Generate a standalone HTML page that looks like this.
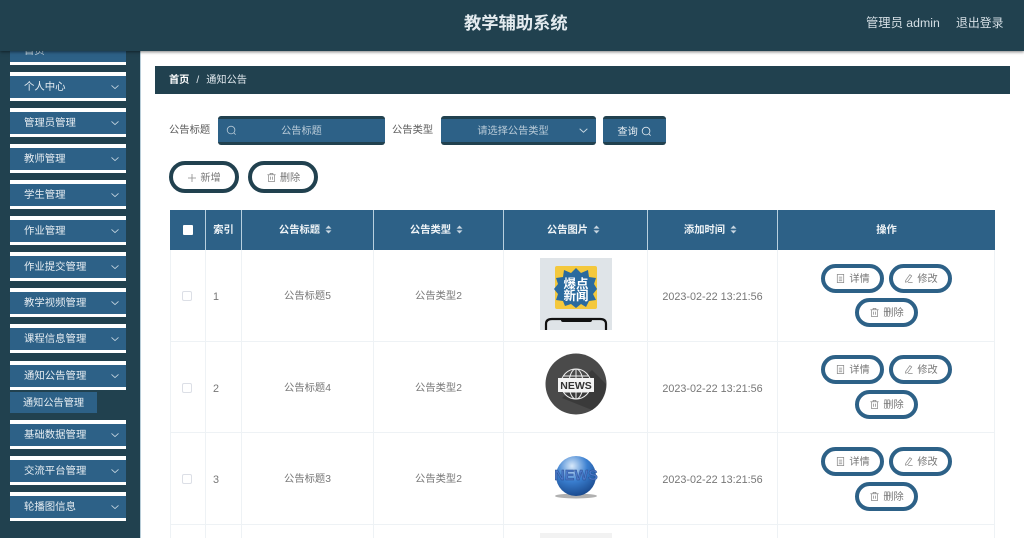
<!DOCTYPE html>
<html lang="zh-CN">
<head>
<meta charset="utf-8">
<title>教学辅助系统</title>
<style>
*{box-sizing:border-box}
html,body{margin:0;padding:0;background:#fff}
body{width:1024px;height:538px;overflow:hidden;background:#fff;position:relative;font-family:"Liberation Sans","Noto Sans CJK SC",sans-serif;font-size:10px;color:#666;filter:blur(.3px)}
.a{position:absolute}
.head{left:0;top:0;width:1024px;height:51px;background:#21414f;box-shadow:0 1px 3px rgba(0,0,0,.5);z-index:5}
.side{left:0;top:0;width:141px;height:538px;background:#21414f;border-right:1px solid #b8cdd8}
.mi{left:10px;width:116px;height:29px;background:#2d6187;border-top:4px solid #fff;border-bottom:3px solid #fff;color:#e6edf2;line-height:24px;padding-left:14px;font-size:10.4px}
.mi svg{position:absolute;left:100px;top:6px}
.sub{left:10px;top:392px;width:87px;height:21px;background:#2d6187;color:#e6edf2;line-height:23px;padding-left:13px;font-size:10.2px}
.crumb{left:155px;top:66px;width:855px;height:28px;background:#21414f;color:#dfe7ec;font-size:10.2px;line-height:30px;padding-left:14px}
.lbl{font-size:10.3px;color:#5c5c5c;line-height:14px}
.inp{height:29px;background:#2d6187;border-top:3px solid #21414f;border-bottom:3px solid #21414f;border-radius:3px;color:#b9cbd8;font-size:10.2px;line-height:25px;text-align:center}
.pill{background:#fff;border-radius:16px;text-align:center;color:#777;font-size:10.2px}
.pa{border:4px solid #21414f;width:70px;height:32px;line-height:27px;top:161px}
.pb{border:4px solid #2d6187;width:63px;height:29px;line-height:24px}
.pill svg,.inp svg{vertical-align:-2px}
.pa svg{margin-right:3px}
.pb svg{margin-right:3px}
.th{top:210px;height:40px;background:#2d6187;color:#eef3f6;font-weight:bold;text-align:center;line-height:41px;font-size:10.3px;border-right:1px solid #b8d0df}
.ps{padding-right:4px}
.sort{display:inline-block;margin-left:5px;vertical-align:-1px;width:7px;height:9px}
.vl{width:1px;background:#eef2f5;top:250px;height:288px}
.hl{height:1px;background:#eef2f5;left:170px;width:825px}
.cell{font-size:10.3px;color:#777;text-align:center;line-height:16px}
.date{font-size:10.8px}
.cb{left:182px;width:10px;height:10px;border:1px solid #dcdfe6;border-radius:2px;background:#fff}
</style>
</head>
<body>
<svg width="0" height="0" style="position:absolute">
<defs>
<symbol id="chev" viewBox="0 0 10 10"><path d="M1.5 3.4 5 6.6 8.5 3.4" fill="none" stroke="#c8d8e2" stroke-width=".8"/></symbol>
<symbol id="srch" viewBox="0 0 12 12"><circle cx="5.5" cy="5.5" r="4.2" fill="none" stroke="currentColor" stroke-width=".9"/><path d="M8.6 8.6 10.5 10.5" stroke="currentColor" stroke-width=".9"/></symbol>
<symbol id="trash" viewBox="0 0 12 12"><path d="M1.5 3h9M4.5 3V1.5h3V3M2.8 3v7.5h6.4V3M5 5v3.5M7 5v3.5" fill="none" stroke="#8a8a8a" stroke-width=".8"/></symbol>
<symbol id="doc" viewBox="0 0 12 12"><path d="M2.5 1.5h7v9h-7zM4.2 4.5h3.6M4.2 6.5h3.6M4.2 8.5h3.6" fill="none" stroke="#8a8a8a" stroke-width=".8"/></symbol>
<symbol id="edit" viewBox="0 0 12 12"><path d="M3 8 7.5 1.8 9.5 3.2 5 9.5 2.7 10zM5.5 10.5h5" fill="none" stroke="#8a8a8a" stroke-width=".8"/></symbol>
<symbol id="sorti" viewBox="0 0 7 9"><path d="M3.5 0.5 6.5 3.6H.5zM3.5 8.5 .5 5.4h6z" fill="#c9d7e1"/></symbol>
</defs>
</svg>

<div class="a side"></div>
<div class="a mi" style="top:36px;color:#c8d8e2">首页</div>
<div class="a mi" style="top:72px">个人中心<svg width="10" height="10"><use href="#chev"/></svg></div>
<div class="a mi" style="top:108px">管理员管理<svg width="10" height="10"><use href="#chev"/></svg></div>
<div class="a mi" style="top:144px">教师管理<svg width="10" height="10"><use href="#chev"/></svg></div>
<div class="a mi" style="top:180px">学生管理<svg width="10" height="10"><use href="#chev"/></svg></div>
<div class="a mi" style="top:216px">作业管理<svg width="10" height="10"><use href="#chev"/></svg></div>
<div class="a mi" style="top:252px">作业提交管理<svg width="10" height="10"><use href="#chev"/></svg></div>
<div class="a mi" style="top:288px">教学视频管理<svg width="10" height="10"><use href="#chev"/></svg></div>
<div class="a mi" style="top:324px">课程信息管理<svg width="10" height="10"><use href="#chev"/></svg></div>
<div class="a mi" style="top:361px">通知公告管理<svg width="10" height="10"><use href="#chev"/></svg></div>
<div class="a sub">通知公告管理</div>
<div class="a mi" style="top:420px">基础数据管理<svg width="10" height="10"><use href="#chev"/></svg></div>
<div class="a mi" style="top:456px">交流平台管理<svg width="10" height="10"><use href="#chev"/></svg></div>
<div class="a mi" style="top:492px">轮播图信息<svg width="10" height="10"><use href="#chev"/></svg></div>

<div class="a head">
  <div class="a" style="left:464px;top:12px;font-size:17.3px;font-weight:bold;color:#e4ebef;line-height:22px;white-space:nowrap">教学辅助系统</div>
  <div class="a" style="left:866px;top:15px;font-size:12.3px;color:#d5dfe5;line-height:16px;white-space:nowrap">管理员 admin</div>
  <div class="a" style="left:956px;top:15px;font-size:11.9px;color:#d5dfe5;line-height:16px;white-space:nowrap">退出登录</div>
</div>

<div class="a crumb"><b style="color:#fff">首页</b><span style="margin:0 7px">/</span>通知公告</div>

<div class="a lbl" style="left:169px;top:124px">公告标题</div>
<div class="a inp" style="left:218px;top:116px;width:167px;color:#b9cbd8">
  <svg class="a" style="left:8px;top:6px" width="11" height="11"><use href="#srch"/></svg><span>公告标题</span>
</div>
<div class="a lbl" style="left:392px;top:124px">公告类型</div>
<div class="a inp" style="left:441px;top:116px;width:155px;padding-right:11px">请选择公告类型
  <svg class="a" style="left:137px;top:6px" width="11" height="11"><use href="#chev"/></svg>
</div>
<div class="a inp" style="left:603px;top:116px;width:63px;color:#e6edf2;line-height:27px">查询 <svg width="11" height="11"><use href="#srch"/></svg></div>

<div class="a pill pa" style="left:169px"><svg width="10" height="10" viewBox="0 0 10 10"><path d="M5 1v8M1 5h8" stroke="#8a8a8a" stroke-width=".8"/></svg>新增</div>
<div class="a pill pa" style="left:248px"><svg width="11" height="11"><use href="#trash"/></svg>删除</div>

<div class="a th" style="left:170px;width:36px"><span class="a" style="left:13px;top:15px;width:10px;height:10px;background:#fff;border-radius:1px"></span></div>
<div class="a th" style="left:206px;width:36px">索引</div>
<div class="a th ps" style="left:242px;width:132px">公告标题<svg class="sort"><use href="#sorti"/></svg></div>
<div class="a th ps" style="left:374px;width:130px">公告类型<svg class="sort"><use href="#sorti"/></svg></div>
<div class="a th ps" style="left:504px;width:144px">公告图片<svg class="sort"><use href="#sorti"/></svg></div>
<div class="a th ps" style="left:648px;width:130px">添加时间<svg class="sort"><use href="#sorti"/></svg></div>
<div class="a th" style="left:778px;width:217px;border-right:0;line-height:42px">操作</div>

<div class="a vl" style="left:170px"></div><div class="a vl" style="left:205px"></div><div class="a vl" style="left:241px"></div>
<div class="a vl" style="left:373px"></div><div class="a vl" style="left:503px"></div><div class="a vl" style="left:647px"></div>
<div class="a vl" style="left:777px"></div><div class="a vl" style="left:994px"></div>
<div class="a hl" style="top:341px"></div><div class="a hl" style="top:432px"></div><div class="a hl" style="top:524px"></div>

<!-- row 1 -->
<div class="a cb" style="top:291px"></div>
<div class="a cell" style="left:213px;top:289px;font-size:10.8px">1</div>
<div class="a cell" style="left:242px;width:131px;top:289px">公告标题5</div>
<div class="a cell" style="left:374px;width:129px;top:289px">公告类型2</div>
<div class="a cell date" style="left:648px;width:129px;top:289px">2023-02-22 13:21:56</div>
<svg class="a" style="left:540px;top:258px" width="72" height="72" viewBox="0 0 72 72">
  <rect width="72" height="72" fill="#dfe4e8"/>
  <rect x="15" y="8" width="42" height="43" rx="2" fill="#f4c83c"/>
  <path d="M36 10l5 5 7-3 1 7 7 1-2 6 3 5-4 5 3 6-7 1-3 6-5-3-5 4-5-4-6 2-2-5-7-1 2-6-4-5 4-5-2-6 7-1 1-7 7 3z" fill="#2a6a9e"/>
  <text x="36" y="30" text-anchor="middle" font-size="12.5" font-weight="bold" fill="#fff" font-family="'Noto Sans CJK SC',sans-serif">爆点</text>
  <text x="36" y="42" text-anchor="middle" font-size="12.5" font-weight="bold" fill="#fff" font-family="'Noto Sans CJK SC',sans-serif">新闻</text>
  <path d="M6 72v-6q0-5 6-5h48q6 0 6 5v6" fill="none" stroke="#111" stroke-width="2.2"/>
  <rect x="21" y="60" width="31" height="4" rx="2" fill="#111"/>
</svg>
<div class="a pill pb" style="left:821px;top:264px"><svg width="11" height="11"><use href="#doc"/></svg>详情</div>
<div class="a pill pb" style="left:889px;top:264px"><svg width="11" height="11"><use href="#edit"/></svg>修改</div>
<div class="a pill pb" style="left:855px;top:298px"><svg width="11" height="11"><use href="#trash"/></svg>删除</div>

<!-- row 2 -->
<div class="a cb" style="top:383px"></div>
<div class="a cell" style="left:213px;top:381px;font-size:10.8px">2</div>
<div class="a cell" style="left:242px;width:131px;top:381px">公告标题4</div>
<div class="a cell" style="left:374px;width:129px;top:381px">公告类型2</div>
<div class="a cell date" style="left:648px;width:129px;top:381px">2023-02-22 13:21:56</div>
<svg class="a" style="left:540px;top:348px" width="72" height="72" viewBox="0 0 72 72">
  <circle cx="36" cy="36" r="30.5" fill="#4a4a4a"/>
  <path d="M52 22 66 36a30.5 30.5 0 0 1-14 26L22 50z" fill="#3a3a3a"/>
  <g fill="none" stroke="#eee" stroke-width="1"><circle cx="36" cy="36" r="15"/><ellipse cx="36" cy="36" rx="7" ry="15"/><path d="M36 21v30M23 28h26M23 44h26"/></g>
  <rect x="18" y="30" width="36" height="14" fill="#f4f4f4"/>
  <text x="36" y="41" text-anchor="middle" font-size="10.5" font-weight="bold" fill="#333" font-family="'Liberation Sans',sans-serif">NEWS</text>
</svg>
<div class="a pill pb" style="left:821px;top:355px"><svg width="11" height="11"><use href="#doc"/></svg>详情</div>
<div class="a pill pb" style="left:889px;top:355px"><svg width="11" height="11"><use href="#edit"/></svg>修改</div>
<div class="a pill pb" style="left:855px;top:390px"><svg width="11" height="11"><use href="#trash"/></svg>删除</div>

<!-- row 3 -->
<div class="a cb" style="top:474px"></div>
<div class="a cell" style="left:213px;top:472px;font-size:10.8px">3</div>
<div class="a cell" style="left:242px;width:131px;top:472px">公告标题3</div>
<div class="a cell" style="left:374px;width:129px;top:472px">公告类型2</div>
<div class="a cell date" style="left:648px;width:129px;top:472px">2023-02-22 13:21:56</div>
<svg class="a" style="left:540px;top:441px" width="72" height="72" viewBox="0 0 72 72">
  <defs><radialGradient id="g" cx=".4" cy=".25" r=".85"><stop offset="0" stop-color="#d8e9fa"/><stop offset=".45" stop-color="#3a7fd0"/><stop offset="1" stop-color="#143f80"/></radialGradient></defs>
  <ellipse cx="36" cy="55" rx="21" ry="2.5" fill="#8f8f8f" opacity=".7"/>
  <circle cx="36" cy="35" r="20" fill="url(#g)"/>
  <text x="36" y="39" text-anchor="middle" font-size="14.5" font-weight="bold" fill="#4a78c8" stroke="#2a4d8c" stroke-width=".4" font-family="'Liberation Sans',sans-serif">NEWS</text>
</svg>
<div class="a pill pb" style="left:821px;top:447px"><svg width="11" height="11"><use href="#doc"/></svg>详情</div>
<div class="a pill pb" style="left:889px;top:447px"><svg width="11" height="11"><use href="#edit"/></svg>修改</div>
<div class="a pill pb" style="left:855px;top:482px"><svg width="11" height="11"><use href="#trash"/></svg>删除</div>

<!-- row 4 sliver -->
<div class="a" style="left:540px;top:533px;width:72px;height:5px;background:#f2f2f2"></div>
</body>
</html>
